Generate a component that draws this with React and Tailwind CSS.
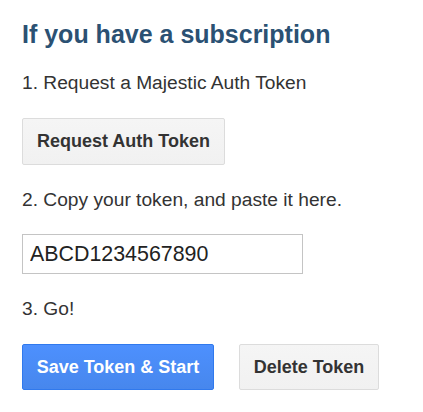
import React from "react";

const grayBtn =
  "h-[47px] flex items-center justify-center rounded-[2px] border border-[#dcdcdc] bg-gradient-to-b from-[#f5f5f5] to-[#f1f1f1] text-[18px] font-bold text-[#333]";

export default function App() {
  return (
    <div className="min-h-[412px] w-[423px] bg-white pl-[22px] pt-5 font-['Liberation_Sans',Arial,sans-serif]">
      <div className="flex flex-col items-start">
        <h2 className="text-[25px] leading-[28px] font-bold text-[#2b5173]">If you have a subscription</h2>

        <p className="mt-[23px] text-[19.2px] leading-[24px] text-[#333]">1. Request a Majestic Auth Token</p>
        <button className={`${grayBtn} mt-[23px] w-[203px]`}>Request Auth Token</button>

        <p className="mt-[23px] text-[19.2px] leading-[24px] text-[#333]">2. Copy your token, and paste it here.</p>
        <input
          className="mt-[22px] h-[40px] w-[281px] border border-[#c4c4c4] px-[7px] text-[21.4px] text-[#222] outline-none"
          defaultValue="ABCD1234567890"
        />

        <p className="mt-[23px] text-[19.2px] leading-[24px] text-[#333]">3. Go!</p>
        <div className="mt-[23px] flex gap-[25px]">
          <button className="flex h-[46px] w-[192px] items-center justify-center rounded-[2px] border border-[#3079ed] bg-gradient-to-b from-[#4d90fe] to-[#4787ed] text-[18px] font-bold text-white">
            Save Token &amp; Start
          </button>
          <button className={`${grayBtn} !h-[46px] w-[140px]`}>Delete Token</button>
        </div>
      </div>
    </div>
  );
}
